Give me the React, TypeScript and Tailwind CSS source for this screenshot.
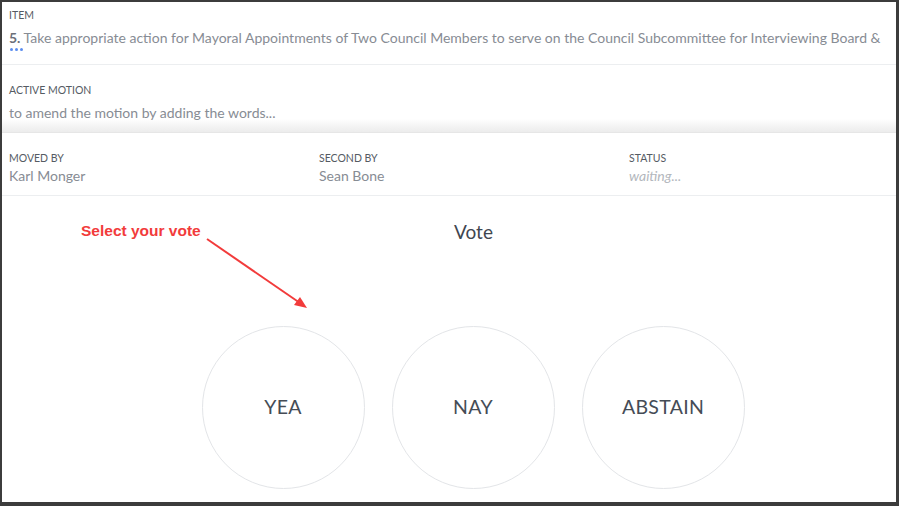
import React from 'react';

const labelCls = 'text-[10.5px] leading-[14px] uppercase text-[#555b63]';
const valueCls = 'text-[14px] leading-[18px] text-[#878c94]';

function Info({ label, value, italic }: { label: string; value: string; italic?: boolean }) {
  return (
    <div className="w-[310px] shrink-0">
      <div className={labelCls}>{label}</div>
      <div className={`${valueCls} mt-[2px] ${italic ? 'italic text-[#b3b7bd]' : ''}`}>{value}</div>
    </div>
  );
}

function VoteButton({ label }: { label: string }) {
  return (
    <button className="w-[163px] h-[163px] rounded-full border border-[#e3e5e8] bg-white flex items-center justify-center text-[19.5px] text-[#454c56] tracking-[0.3px]">
      {label}
    </button>
  );
}

export default function App() {
  return (
    <div
      className="relative box-border w-[899px] h-[506px] bg-white overflow-hidden"
      style={{ fontFamily: 'Lato, "Open Sans", sans-serif' }}
    >
      {/* Item */}
      <div className="px-[9px] pt-[8px] h-[65px] border-b border-[#eceef0] overflow-hidden">
        <div className={labelCls}>Item</div>
        <div className={`${valueCls} mt-[7px] whitespace-nowrap text-[13.8px]`}>
          <span className="font-bold text-[#6b7079]">5.</span> Take appropriate action for Mayoral Appointments of Two Council Members to serve on the Council Subcommittee for Interviewing Board &amp;
        </div>
        <div className="flex gap-[2px] mt-[1px] ml-[1px]">
          <span className="w-[3px] h-[3px] rounded-full bg-[#5b8def]" />
          <span className="w-[3px] h-[3px] rounded-full bg-[#5b8def]" />
          <span className="w-[3px] h-[3px] rounded-full bg-[#5b8def]" />
        </div>
      </div>

      {/* Active motion */}
      <div className="px-[9px] pt-[18px] h-[68px] bg-gradient-to-b from-white from-[80%] to-[#ececec] border-b border-[#e6e6e6]">
        <div className={labelCls}>Active Motion</div>
        <div className={`${valueCls} mt-[7px]`}>to amend the motion by adding the words...</div>
      </div>

      {/* Moved / second / status */}
      <div className="flex px-[9px] pt-[18px] h-[63px] border-b border-[#eceef0]">
        <Info label="Moved by" value="Karl Monger" />
        <Info label="Second by" value="Sean Bone" />
        <Info label="Status" value="waiting..." italic />
      </div>

      {/* Vote */}
      <div className="flex flex-col items-center">
        <div className="text-[19px] text-[#3f4650] mt-[22px] ml-[48px]">Vote</div>
        <div className="flex gap-[27px] mt-[79px] ml-[47px]">
          <VoteButton label="YEA" />
          <VoteButton label="NAY" />
          <VoteButton label="ABSTAIN" />
        </div>
      </div>

      {/* Annotation */}
      <div
        className="absolute left-[81px] top-[219px] text-[15.5px] font-bold text-[#f23b3b]"
        style={{ fontFamily: '"Liberation Sans", Arial, sans-serif' }}
      >
        Select your vote
      </div>
      <svg className="absolute left-0 top-0" width="899" height="506" viewBox="0 0 899 506">
        <line x1="207" y1="239" x2="300" y2="303" stroke="#f23b3b" strokeWidth="2" />
        <polygon points="307,308 294,305 300,297" fill="#f23b3b" />
      </svg>

      {/* screenshot frame */}
      <div className="absolute inset-0 border-[#3c3c3c] border-l-2 border-t-2 border-r-[3px] border-b-4 pointer-events-none" />
    </div>
  );
}
